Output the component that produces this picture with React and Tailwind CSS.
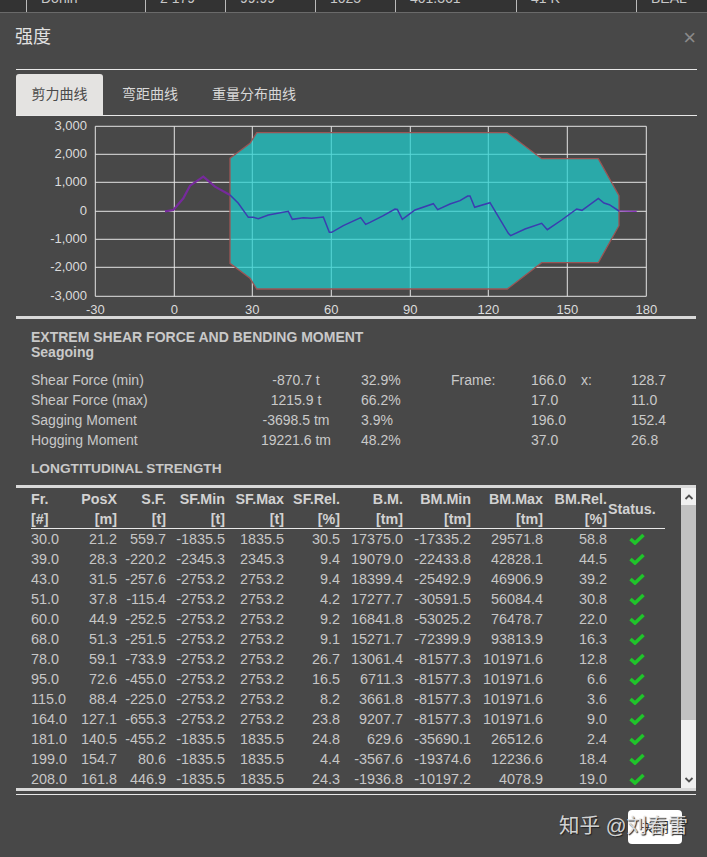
import React from 'react';

const rows = [
  ['30.0', '21.2', '559.7', '-1835.5', '1835.5', '30.5', '17375.0', '-17335.2', '29571.8', '58.8'],
  ['39.0', '28.3', '-220.2', '-2345.3', '2345.3', '9.4', '19079.0', '-22433.8', '42828.1', '44.5'],
  ['43.0', '31.5', '-257.6', '-2753.2', '2753.2', '9.4', '18399.4', '-25492.9', '46906.9', '39.2'],
  ['51.0', '37.8', '-115.4', '-2753.2', '2753.2', '4.2', '17277.7', '-30591.5', '56084.4', '30.8'],
  ['60.0', '44.9', '-252.5', '-2753.2', '2753.2', '9.2', '16841.8', '-53025.2', '76478.7', '22.0'],
  ['68.0', '51.3', '-251.5', '-2753.2', '2753.2', '9.1', '15271.7', '-72399.9', '93813.9', '16.3'],
  ['78.0', '59.1', '-733.9', '-2753.2', '2753.2', '26.7', '13061.4', '-81577.3', '101971.6', '12.8'],
  ['95.0', '72.6', '-455.0', '-2753.2', '2753.2', '16.5', '6711.3', '-81577.3', '101971.6', '6.6'],
  ['115.0', '88.4', '-225.0', '-2753.2', '2753.2', '8.2', '3661.8', '-81577.3', '101971.6', '3.6'],
  ['164.0', '127.1', '-655.3', '-2753.2', '2753.2', '23.8', '9207.7', '-81577.3', '101971.6', '9.0'],
  ['181.0', '140.5', '-455.2', '-1835.5', '1835.5', '24.8', '629.6', '-35690.1', '26512.6', '2.4'],
  ['199.0', '154.7', '80.6', '-1835.5', '1835.5', '4.4', '-3567.6', '-19374.6', '12236.6', '18.4'],
  ['208.0', '161.8', '446.9', '-1835.5', '1835.5', '24.3', '-1936.8', '-10197.2', '4078.9', '19.0'],
];

const heads = [
  ['PosX', '[m]'],
  ['S.F.', '[t]'],
  ['SF.Min', '[t]'],
  ['SF.Max', '[t]'],
  ['SF.Rel.', '[%]'],
  ['B.M.', '[tm]'],
  ['BM.Min', '[tm]'],
  ['BM.Max', '[tm]'],
  ['BM.Rel.', '[%]'],
];

const colWidths = [40, 46, 49, 59, 59, 56, 63, 68, 72, 64, 58];

const summary = [
  ['Shear Force (min)', '-870.7 t', '32.9%', 'Frame:', '166.0', 'x:', '128.7'],
  ['Shear Force (max)', '1215.9 t', '66.2%', '', '17.0', '', '11.0'],
  ['Sagging Moment', '-3698.5 tm', '3.9%', '', '196.0', '', '152.4'],
  ['Hogging Moment', '19221.6 tm', '48.2%', '', '37.0', '', '26.8'],
];

const xTicks = [
  [95.3, '-30'], [174.3, '0'], [252.3, '30'], [331.3, '60'],
  [410.3, '90'], [488.3, '120'], [567.3, '150'], [646.3, '180'],
];
const yTicks = [
  [126.3, '3,000'], [154.3, '2,000'], [182.3, '1,000'], [211.3, '0'],
  [239.3, '-1,000'], [267.3, '-2,000'], [296.3, '-3,000'],
];

const hull = '230,158.3 250,143.3 256.7,132.7 507.3,132.7 541.7,158.7 598.3,158.7 619,195.7 619,225.7 598.3,262.7 541.7,262.7 507.3,289 256.7,289 250,278.3 230,263.3';

const leftPart = [[345,289],[370,285],[400,250],[420,212],[460,185],[495,215],[540,240]]
  .map(([x, y]) => `${50 + x / 3},${115 + y / 3}`).join(' ');
const endPart = [[747,288],[800,289]]
  .map(([x, y]) => `${370 + x / 3},${115 + y / 3}`).join(' ');
const midPart = [
  ...[[540,240],[565,265],[595,307],[610,307],[625,311],[655,300],[715,289],[727,313],[760,308],[785,310],[820,306],[838,352],[845,352],[880,332],[932,308],[947,328]]
    .map(([x, y]) => `${50 + x / 3},${115 + y / 3}`),
  ...[[0,322],[40,302],[75,282],[82,283],[97,313],[135,285],[190,266],[203,284],[240,267],[270,257],[293,243],[300,243],[314,277],[360,263],[415,355],[422,362],[465,342],[515,325],[532,344],[575,315],[620,282],[636,286],[685,250],[702,264],[718,269],[747,288]]
    .map(([x, y]) => `${370 + x / 3},${115 + y / 3}`),
].join(' ');

function Chart() {
  return (
    <svg className="block h-[200px] w-[680px]" viewBox="16 116 680 200">
      {xTicks.map(([x]) => (
        <line key={x} x1={x} x2={x} y1="126.3" y2="296.3" stroke="#e4e4e4" strokeWidth="1" />
      ))}
      {yTicks.map(([y]) => (
        <line key={y} x1="95.3" x2="646.3" y1={y} y2={y} stroke="#e4e4e4" strokeWidth="1" />
      ))}
      <polygon points={hull} fill="rgb(30,209,209)" fillOpacity="0.71" stroke="#9a5555" strokeWidth="1.3" />
      <polyline points={leftPart} fill="none" stroke="#762a9c" strokeWidth="2.2" />
      <polyline points={endPart} fill="none" stroke="#8a2fc0" strokeWidth="1.2" />
      <polyline points={midPart} fill="none" stroke="#3b3db0" strokeWidth="1.5" />
      {yTicks.map(([y, label]) => (
        <text key={label} x="87" y={y + 3.7} textAnchor="end" fontSize="13" fill="#dcdcdc">{label}</text>
      ))}
      {xTicks.map(([x, label]) => (
        <text key={label} x={x} y="314" textAnchor="middle" fontSize="13" fill="#dcdcdc">{label}</text>
      ))}
    </svg>
  );
}

function Check() {
  return (
    <svg className="mx-auto block h-[12px] w-[16px]" viewBox="0 0 16 12">
      <polyline points="1.5,6 6,10 14.5,2" fill="none" stroke="#1fc42a" strokeWidth="3.6" />
    </svg>
  );
}

export default function App() {
  return (
    <div className="relative flex h-[857px] w-[707px] flex-col overflow-hidden bg-[#484848] font-['Liberation_Sans','Noto_Sans_CJK_SC',sans-serif]">
      {/* page behind the dialog, only the bottom of one row shows */}
      <div className="flex h-[13px] shrink-0 overflow-hidden border-b border-[#6a6a6a] bg-[#333333] pl-[26px] text-[14px] leading-none text-[#c8c8c8]">
        {[['Donin', 119], ['2 179', 80], ['99.99', 90], ['1025', 80], ['401.361', 121], ['41 K', 120], ['BEAL', 71]].map(([t, w]) => (
          <div key={t} style={{ width: w }} className="h-[13px] border-l border-[#bbbbbb] pl-[14px] pt-0">
            <div className="-mt-[9px]">{t}</div>
          </div>
        ))}
      </div>

      <div className="flex h-[56px] shrink-0 items-center justify-between pb-[7px] pl-[15px] pr-[11px]">
        <h4 className="text-[18px] font-normal text-[#e2e2e2]">强度</h4>
        <span className="text-[22px] leading-none text-[#8a8a8a]">×</span>
      </div>

      <div className="ml-[16px] mr-[10px] flex h-[47px] shrink-0 items-end border-y border-[#e8e8e8] pt-[4px]">
        <div className="flex h-[41px] w-[87px] items-center justify-center rounded-t-[3px] bg-[#e4e3e1] text-[14px] text-[#4a4a4a]">剪力曲线</div>
        <div className="flex h-[41px] w-[94px] items-center justify-center text-[14px] text-[#d8d8d8]">弯距曲线</div>
        <div className="flex h-[41px] w-[114px] items-center justify-center text-[14px] text-[#d8d8d8]">重量分布曲线</div>
      </div>

      <div className="ml-[16px] mr-[11px] shrink-0">
        <Chart />
      </div>

      <div className="ml-[16px] mr-[11px] h-[3px] shrink-0 bg-[#d9d9d9]" />

      <div className="h-[166px] shrink-0 pl-[31px] pt-[11px] text-[14px] text-[#c9c9c9]">
        <div className="text-[14px] font-bold leading-[15px]">
          EXTREM SHEAR FORCE AND BENDING MOMENT
          <br />
          Seagoing
        </div>
        <div className="mt-[10px] grid grid-cols-[200px_130px_90px_80px_50px_50px_1fr] auto-rows-[20px] leading-[20px]">
          {summary.map((r) =>
            r.map((c, i) => (
              <div key={r[0] + i} className={i === 1 ? 'text-center' : ''}>{c}</div>
            ))
          )}
        </div>
        <div className="mt-[9px] text-[13.7px] font-bold leading-[20px]">LONGTITUDINAL STRENGTH</div>
      </div>

      <div className="ml-[16px] mr-[11px] flex h-[306px] shrink-0 overflow-hidden border-y-[3px] border-[#d9d9d9]">
        <div className="flex-1 overflow-hidden pl-[15px]">
          <table className="w-[634px] table-fixed text-[14.4px] text-[#c6c6c6]">
            <colgroup>
              {colWidths.map((w, i) => (
                <col key={i} style={{ width: w }} />
              ))}
            </colgroup>
            <thead className="text-[14.3px] font-bold leading-[18px] text-[#d2d2d2]">
              <tr className="h-[20px]">
                <th className="pt-[2px] text-left font-bold">Fr.</th>
                {heads.map(([a]) => (
                  <th key={a} className="pt-[2px] text-right font-bold">{a}</th>
                ))}
                <th rowSpan={2} className="border-b border-[#e8e8e8] pl-[1px] pt-[2px] text-left font-bold">Status.</th>
              </tr>
              <tr className="h-[20px] border-b border-[#e8e8e8]">
                <th className="pt-[2px] text-left font-bold">[#]</th>
                {heads.map(([a, b]) => (
                  <th key={a} className="pt-[2px] text-right font-bold">{b}</th>
                ))}
              </tr>
            </thead>
            <tbody>
              {rows.map((r) => (
                <tr key={r[0]} className="h-[20px] leading-[20px]">
                  {r.map((c, i) => (
                    <td key={i} className={i === 0 ? 'text-left' : 'text-right'}>{c}</td>
                  ))}
                  <td className="pl-[1px]"><Check /></td>
                </tr>
              ))}
            </tbody>
          </table>
        </div>
        <div className="flex w-[15px] shrink-0 flex-col bg-[#f0f0f0]">
          <div className="flex h-[17px] items-center justify-center">
            <svg className="h-[8px] w-[10px]" viewBox="0 0 10 8">
              <polyline points="1.5,6 5,2.5 8.5,6" fill="none" stroke="#505050" strokeWidth="1.8" />
            </svg>
          </div>
          <div className="h-[215px] bg-[#c1c1c1]" />
          <div className="flex-1" />
          <div className="flex h-[17px] items-center justify-center">
            <svg className="h-[8px] w-[10px]" viewBox="0 0 10 8">
              <polyline points="1.5,2 5,5.5 8.5,2" fill="none" stroke="#505050" strokeWidth="1.8" />
            </svg>
          </div>
        </div>
      </div>

      <div className="ml-[16px] mr-[11px] mt-[3px] h-px shrink-0 bg-[#e8e8e8]" />

      <div className="flex flex-1 justify-end pr-[25px] pt-[15px]">
        <button className="h-[34px] w-[54px] rounded-[4px] bg-white text-[14px] text-[#333333]">关闭</button>
      </div>

      {/* site watermark over the footer */}
      <div className="absolute left-[559px] top-[811px] whitespace-nowrap text-[20.5px] leading-[30px] text-[#e8e8e8]/90 [text-shadow:1px_1px_1px_#222]">
        知乎 @刘春雷
      </div>
    </div>
  );
}
